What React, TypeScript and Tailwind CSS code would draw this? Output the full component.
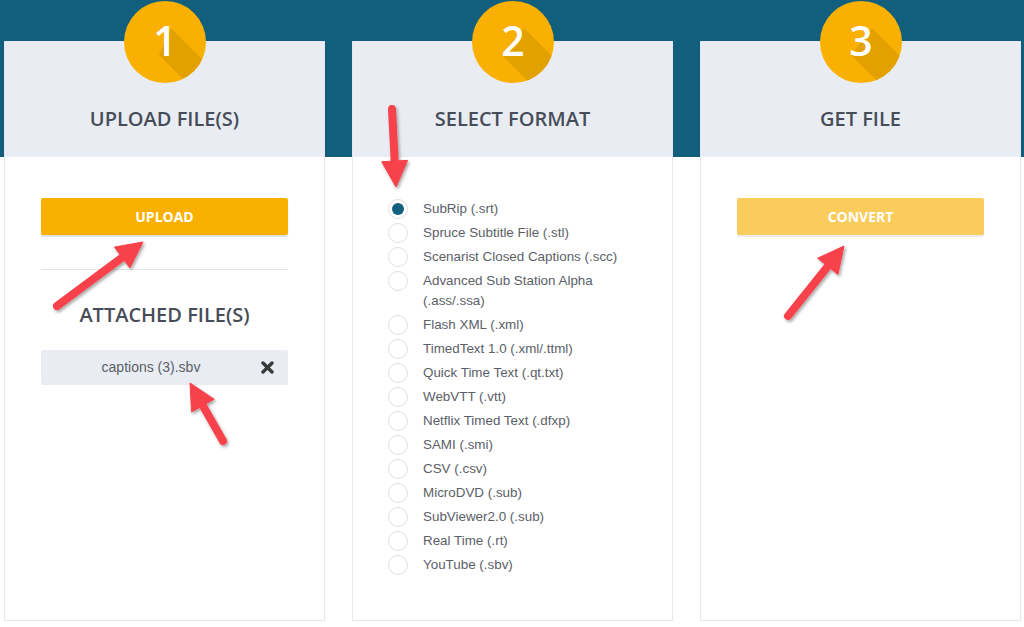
import React from "react";

const formats = [
  "SubRip (.srt)",
  "Spruce Subtitle File (.stl)",
  "Scenarist Closed Captions (.scc)",
  "Advanced Sub Station Alpha (.ass/.ssa)",
  "Flash XML (.xml)",
  "TimedText 1.0 (.xml/.ttml)",
  "Quick Time Text (.qt.txt)",
  "WebVTT (.vtt)",
  "Netflix Timed Text (.dfxp)",
  "SAMI (.smi)",
  "CSV (.csv)",
  "MicroDVD (.sub)",
  "SubViewer2.0 (.sub)",
  "Real Time (.rt)",
  "YouTube (.sbv)",
];

function Badge({ n, glyphLeft, glyphRight }: { n: string; glyphLeft: number; glyphRight: number }) {
  const id = "clip" + n;
  return (
    <svg width="82" height="82" viewBox="0 0 82 82" className="absolute left-1/2 top-[-41px] -translate-x-1/2">
      <defs>
        <clipPath id={id}>
          <circle cx="41" cy="41" r="41" />
        </clipPath>
      </defs>
      <circle cx="41" cy="41" r="41" fill="#f9b000" />
      <polygon
        clipPath={`url(#${id})`}
        fill="#e3a100"
        points={`${glyphRight},27 ${glyphRight + 70},97 ${glyphLeft + 70},124 ${glyphLeft},54`}
      />
      <text
        x="41"
        y="55"
        textAnchor="middle"
        fill="#ffffff"
        fontFamily="'Open Sans', sans-serif"
        fontWeight="600"
        fontSize="41"
      >
        {n}
      </text>
    </svg>
  );
}

function Card({
  n,
  title,
  glyphLeft,
  glyphRight,
  children,
}: {
  n: string;
  title: string;
  glyphLeft: number;
  glyphRight: number;
  children: React.ReactNode;
}) {
  return (
    <div className="relative flex h-[580px] w-[321px] flex-col border border-[#e4e7ee] bg-white">
      <div className="relative h-[115px] bg-[#e9ecf3] pt-[65px] text-center">
        <Badge n={n} glyphLeft={glyphLeft} glyphRight={glyphRight} />
        <div className="text-[20px] font-semibold leading-[24px] text-[#474d58] [font-family:'Open_Sans',sans-serif]">
          {title}
        </div>
      </div>
      <div className="flex-1">{children}</div>
    </div>
  );
}

function arrowParts(x1: number, y1: number, x2: number, y2: number) {
  const dx = x2 - x1;
  const dy = y2 - y1;
  const len = Math.sqrt(dx * dx + dy * dy);
  const ux = dx / len;
  const uy = dy / len;
  const L = 26;
  const hw = 13;
  const bx = x2 - ux * L;
  const by = y2 - uy * L;
  const px = -uy;
  const py = ux;
  return {
    shaft: { x1, y1, x2: bx + ux * 3, y2: by + uy * 3 },
    head: `${x2},${y2} ${bx + px * hw},${by + py * hw} ${bx - px * hw},${by - py * hw}`,
  };
}

function Arrows() {
  const arrows = [
    [57, 306, 143, 242],
    [223, 441, 190, 383],
    [392, 109, 396, 187],
    [788, 316, 844, 246],
  ];
  return (
    <svg className="pointer-events-none absolute left-0 top-0" width="1024" height="627">
      <defs>
        <filter id="ash" x="-20%" y="-20%" width="140%" height="140%">
          <feDropShadow dx="1.5" dy="2" stdDeviation="1.5" floodColor="#000" floodOpacity="0.35" />
        </filter>
      </defs>
      {arrows.map(([a, b, c, d], i) => {
        const p = arrowParts(a, b, c, d);
        return (
          <g key={i} filter="url(#ash)">
            <line {...p.shaft} stroke="#f7424b" strokeWidth="8" strokeLinecap="round" />
            <polygon points={p.head} fill="#f7424b" strokeLinejoin="round" stroke="#f7424b" strokeWidth="1" />
          </g>
        );
      })}
    </svg>
  );
}

function Radio({ checked }: { checked?: boolean }) {
  return (
    <div className="flex h-[20px] w-[20px] shrink-0 items-center justify-center rounded-full border border-[#dcdfe6] bg-white">
      {checked && <div className="h-[12px] w-[12px] rounded-full bg-[#135f7e]" />}
    </div>
  );
}

export default function App() {
  return (
    <div className="relative h-[627px] w-[1024px] overflow-hidden bg-[linear-gradient(to_bottom,#115f7d_157px,#ffffff_157px)]">
      <div className="flex gap-[27px] pl-[4px] pt-[41px]">
        <Card n="1" title="UPLOAD FILE(S)" glyphLeft={35} glyphRight={47}>
          <div className="px-[36px] pt-[41px]">
            <button className="flex h-[37px] w-full items-center justify-center rounded-[2px] bg-[#f9b000] text-[14px] font-bold text-white shadow-[0_2px_1px_rgba(0,0,0,0.12)] [font-family:'Open_Sans',sans-serif]">
              UPLOAD
            </button>
            <div className="mt-[34px] h-px bg-[#e2e4ea]" />
            <div className="mt-[33px] text-center text-[20px] font-semibold leading-[24px] text-[#474d58] [font-family:'Open_Sans',sans-serif]">
              ATTACHED FILE(S)
            </div>
            <div className="mt-[23px] flex h-[35px] items-center rounded-[2px] bg-[#e9ecf3]">
              <div className="flex-1 text-center text-[14px] text-[#5b5f66] [font-family:'Liberation_Sans',Arial,sans-serif]">
                captions (3).sbv
              </div>
              <svg width="13" height="13" viewBox="0 0 13 13" className="mr-[14px]">
                <path d="M2 2 L11 11 M11 2 L2 11" stroke="#3a3a3a" strokeWidth="3.4" strokeLinecap="round" />
              </svg>
            </div>
          </div>
        </Card>
        <Card n="2" title="SELECT FORMAT" glyphLeft={30} glyphRight={52}>
          <div className="flex flex-col pl-[35px] pr-[40px] pt-[40px]">
            {formats.map((f, i) => (
              <div key={f} className="flex items-start gap-[15px] py-[2px]">
                <Radio checked={i === 0} />
                <div className="text-[13.4px] leading-[20px] text-[#5b6068] [font-family:'Liberation_Sans',Arial,sans-serif]">
                  {f}
                </div>
              </div>
            ))}
          </div>
        </Card>
        <Card n="3" title="GET FILE" glyphLeft={31} glyphRight={52}>
          <div className="px-[36px] pt-[41px]">
            <button className="flex h-[37px] w-full items-center justify-center rounded-[2px] bg-[#facc5c] text-[14px] font-bold text-white shadow-[0_2px_1px_rgba(0,0,0,0.08)] [font-family:'Open_Sans',sans-serif]">
              CONVERT
            </button>
          </div>
        </Card>
      </div>
      <Arrows />
    </div>
  );
}
